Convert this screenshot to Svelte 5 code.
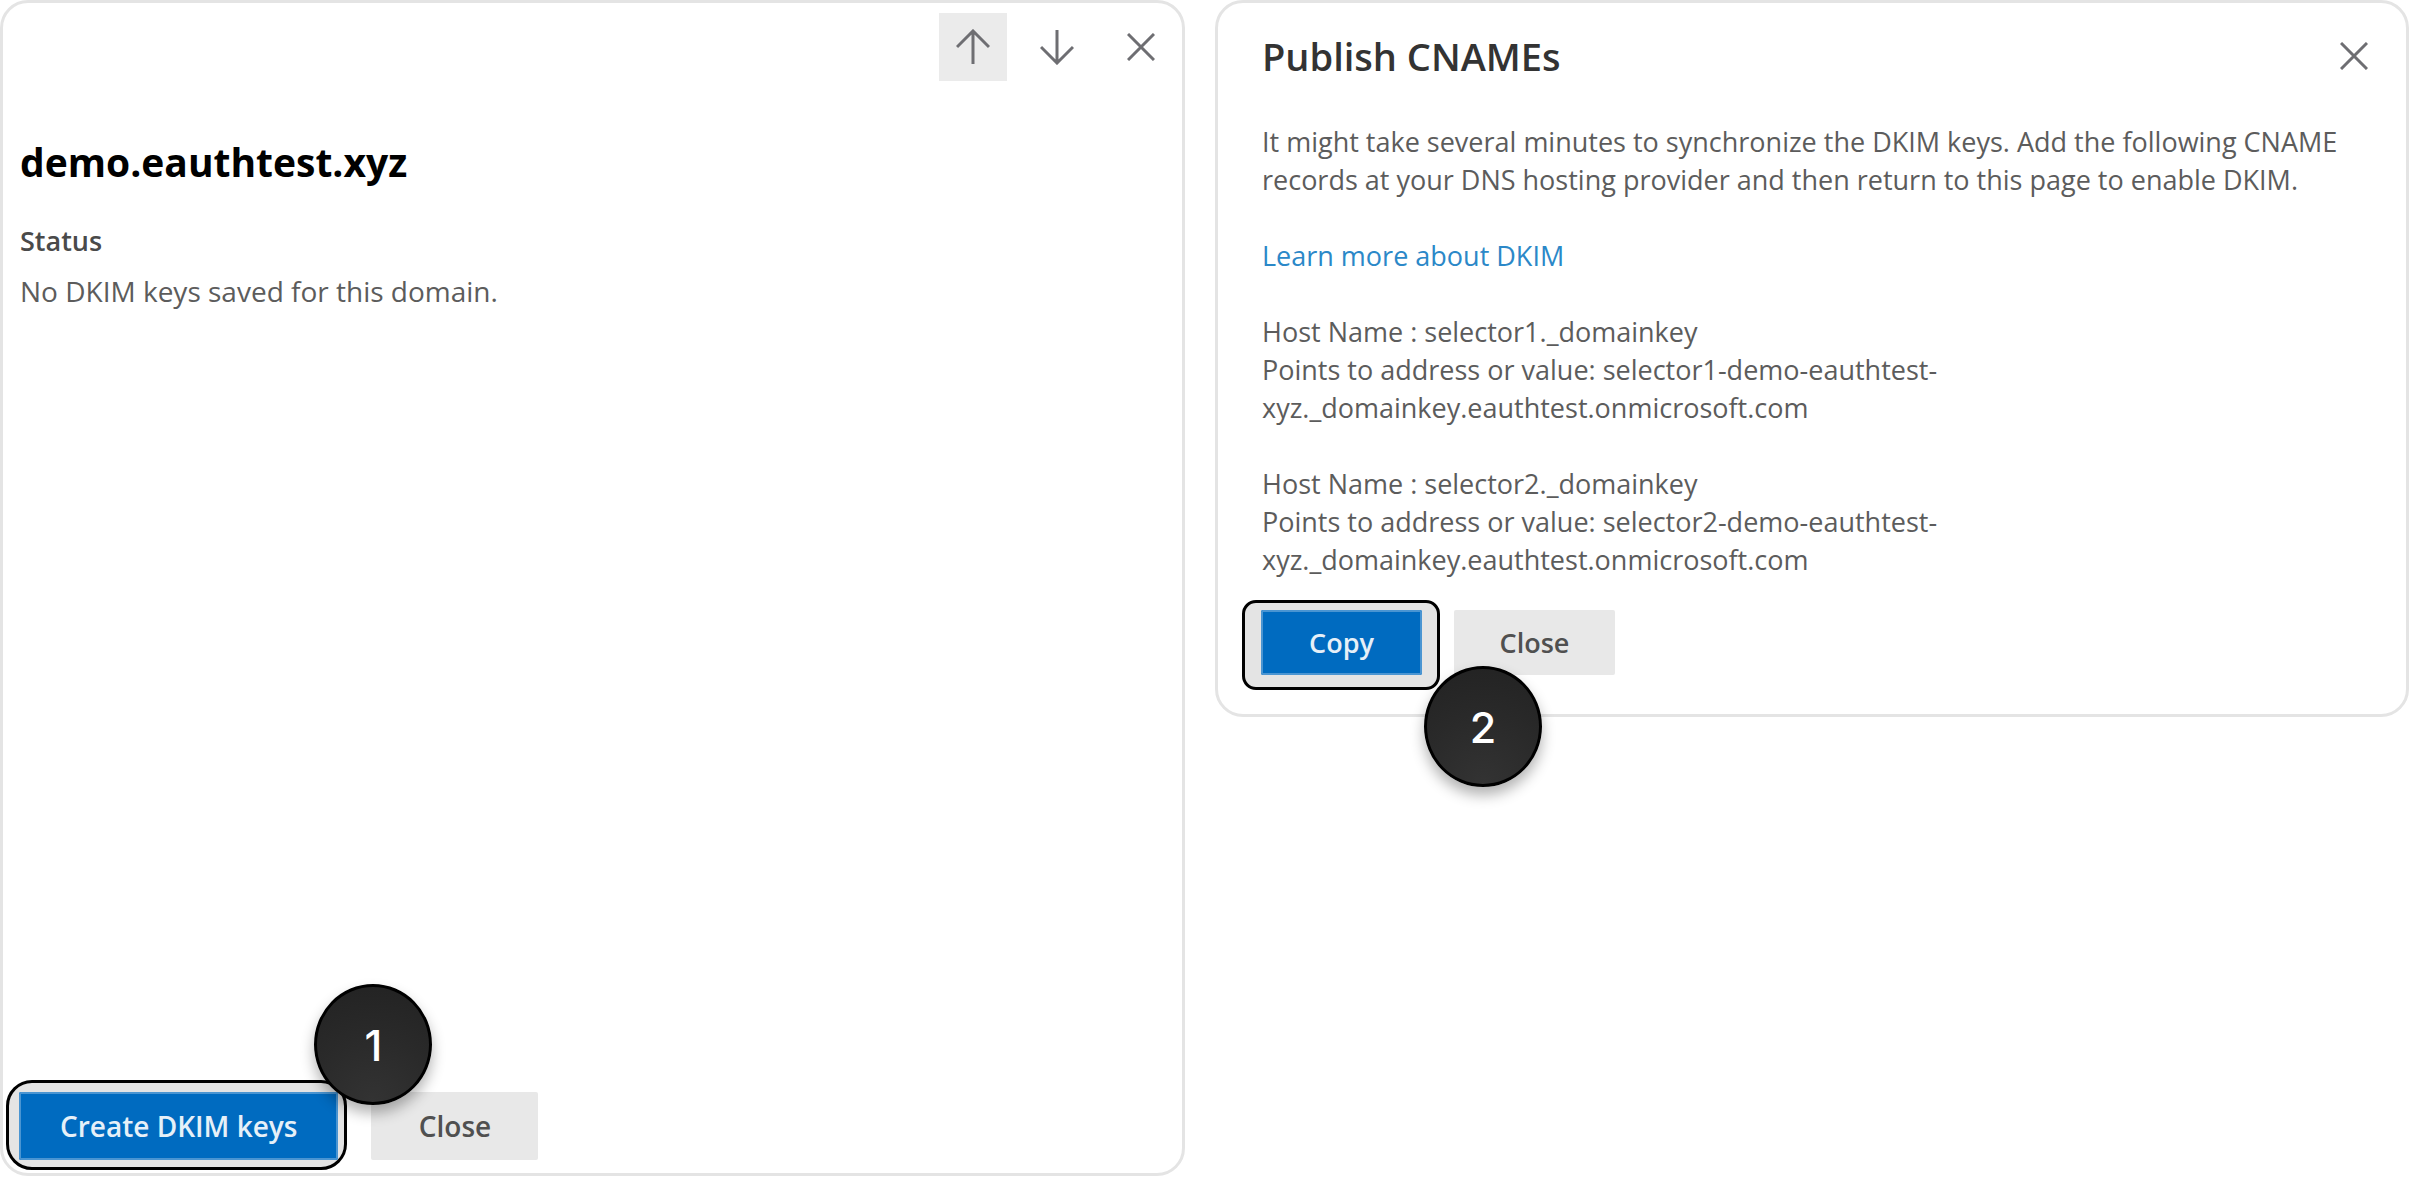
<script lang="ts">
  const domain = 'demo.eauthtest.xyz';
  const records = [
    { host: 'selector1._domainkey', value: ['selector1-demo-eauthtest-', 'xyz._domainkey.eauthtest.onmicrosoft.com'] },
    { host: 'selector2._domainkey', value: ['selector2-demo-eauthtest-', 'xyz._domainkey.eauthtest.onmicrosoft.com'] },
  ];
</script>

{#snippet cross()}
  <svg width="28" height="28" viewBox="0 0 28 28" aria-hidden="true">
    <path d="M1 1 27 27M27 1 1 27" />
  </svg>
{/snippet}

<main>
  <section class="panel details">
    <div class="toolbar">
      <button class="icon active" aria-label="Previous">
        <svg width="34" height="36" viewBox="0 0 34 36" aria-hidden="true">
          <path d="M17 35V2M1 18 17 2 33 18" />
        </svg>
      </button>
      <button class="icon" aria-label="Next">
        <svg width="34" height="36" viewBox="0 0 34 36" aria-hidden="true">
          <path d="M17 1V34M1 18 17 34 33 18" />
        </svg>
      </button>
      <button class="icon" aria-label="Close">{@render cross()}</button>
    </div>
    <div class="info">
      <h1>{domain}</h1>
      <h2>Status</h2>
      <p>No DKIM keys saved for this domain.</p>
    </div>
    <div class="actions">
      <div class="step create">
        <button class="btn primary">Create DKIM keys</button>
        <span class="badge">1</span>
      </div>
      <button class="btn">Close</button>
    </div>
  </section>

  <section class="panel publish">
    <header>
      <h1>Publish CNAMEs</h1>
      <button class="icon" aria-label="Close">{@render cross()}</button>
    </header>
    <div class="text">
      <p>
        It might take several minutes to synchronize the DKIM keys. Add the following CNAME records at
        your DNS hosting provider and then return to this page to enable DKIM.
      </p>
      <p><a href="#dkim">Learn more about DKIM</a></p>
      {#each records as r (r.host)}
        <p>
          Host Name : {r.host}<br />
          Points to address or value: {r.value[0]}<br />
          {r.value[1]}
        </p>
      {/each}
    </div>
    <div class="actions">
      <div class="step copy">
        <button class="btn primary">Copy</button>
        <span class="badge">2</span>
      </div>
      <button class="btn">Close</button>
    </div>
  </section>
</main>

<style>
  :global(body) {
    background: #fff;
  }
  main {
    box-sizing: border-box;
    display: grid;
    grid-template-columns: 1185fr 1194fr;
    gap: 30px;
    align-items: start;
    min-height: 100vh;
    padding-bottom: 1px;
    font-family: 'Open Sans', 'Noto Sans', sans-serif;
    font-size: 27px;
    line-height: 38px;
    color: #5c5c5c;
  }
  h1,
  h2,
  p {
    margin: 0;
  }
  .panel {
    box-sizing: border-box;
    display: flex;
    flex-direction: column;
    border: 3px solid #e4e4e4;
    border-radius: 28px;
  }
  .details {
    align-self: stretch;
    padding: 10px 7px 3px 3px;
    font-size: 28px;
  }
  .toolbar {
    display: flex;
    justify-content: flex-end;
    gap: 16px;
  }
  .icon {
    display: flex;
    align-items: center;
    justify-content: center;
    width: 68px;
    height: 68px;
    padding: 0;
    border: 0;
    background: none;
  }
  .icon.active {
    background: #ebebeb;
  }
  .icon svg {
    fill: none;
    stroke: #6e6e72;
    stroke-width: 3;
  }
  .info {
    flex: 1;
    padding: 57px 14px 0;
  }
  h1 {
    font-size: 38px;
    line-height: 48px;
    font-weight: 600;
    color: #333;
  }
  .info h1 {
    font-size: 39px;
    font-weight: 700;
    color: #000;
  }
  h2 {
    margin: 36px 0 12px;
    font-size: 27px;
    line-height: 38px;
    font-weight: 600;
    color: #4a4a4a;
  }
  .publish {
    padding: 19px 18px 24px 24px;
  }
  header {
    display: flex;
    align-items: center;
    justify-content: space-between;
    padding-left: 20px;
  }
  .text {
    display: flex;
    flex-direction: column;
    gap: 38px;
    margin: 33px 20px 21px;
  }
  a {
    color: #2b88c8;
    text-decoration: none;
  }
  .actions {
    display: flex;
    align-items: baseline;
    gap: 24px;
  }
  .publish .actions {
    gap: 14px;
  }
  .step {
    position: relative;
    border: 3px solid #000;
    background: #e4e4e4;
  }
  .create {
    padding: 9px 6px 7px 10px;
    border-radius: 26px;
  }
  .copy {
    padding: 7px 15px 12px 16px;
    border-radius: 14px;
  }
  .btn {
    height: 68px;
    min-width: 167px;
    padding: 0 41px;
    border: 0;
    border-radius: 2px;
    background: #e8e8e8;
    color: #505050;
    font: inherit;
    font-weight: 600;
  }
  .publish .btn {
    height: 65px;
    min-width: 161px;
  }
  .btn.primary {
    display: block;
    background: #006bc0;
    color: #e6f0f8;
    box-shadow: inset 0 0 0 2px #4a95d2;
  }
  .badge {
    position: absolute;
    z-index: 1;
    box-sizing: border-box;
    display: flex;
    align-items: center;
    justify-content: center;
    width: 118px;
    height: 121px;
    border: 3px solid #000;
    border-radius: 50%;
    background: radial-gradient(circle at 50% 100%, #333 0%, #2a2a2a 50%, #222 100%);
    box-shadow: 0 8px 14px rgba(0, 0, 0, 0.3);
    color: #fff;
    font-family: Inter, sans-serif;
    font-size: 43px;
    font-weight: 500;
  }
  .create .badge {
    right: -88px;
    bottom: 62px;
  }
  .copy .badge {
    right: -105px;
    bottom: -100px;
  }
</style>
